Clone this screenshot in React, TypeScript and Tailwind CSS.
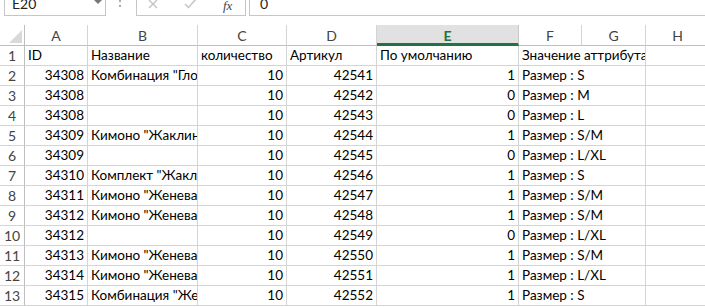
import React from "react";

const cols = [25, 63, 110, 89, 90, 142, 63, 64, 64];

type Row = [string, string, string, string, string, string];

const rows: Row[] = [
  ["34308", 'Комбинация "Глория"', "10", "42541", "1", "Размер : S"],
  ["34308", "", "10", "42542", "0", "Размер : M"],
  ["34308", "", "10", "42543", "0", "Размер : L"],
  ["34309", 'Кимоно "Жаклин"', "10", "42544", "1", "Размер : S/M"],
  ["34309", "", "10", "42545", "0", "Размер : L/XL"],
  ["34310", 'Комплект "Жаклин"', "10", "42546", "1", "Размер : S"],
  ["34311", 'Кимоно "Женева"', "10", "42547", "1", "Размер : S/M"],
  ["34312", 'Кимоно "Женева"', "10", "42548", "1", "Размер : S/M"],
  ["34312", "", "10", "42549", "0", "Размер : L/XL"],
  ["34313", 'Кимоно "Женева"', "10", "42550", "1", "Размер : S/M"],
  ["34314", 'Кимоно "Женева"', "10", "42551", "1", "Размер : L/XL"],
  ["34315", 'Комбинация "Женева"', "10", "42552", "1", "Размер : S"],
];

const cell =
  "h-[20px] border-r border-b border-[#d4d4d4] overflow-hidden whitespace-nowrap leading-[19px] px-[3px] text-black";

export default function App() {
  return (
    <div
      className="w-[705px] h-[307px] overflow-hidden bg-white text-[13.5px]"
      style={{ fontFamily: "Lato, 'Noto Sans', sans-serif" }}
    >
      {/* formula bar */}
      <div className="relative h-[16px] w-[705px]">
        <div className="absolute left-[4px] top-[-9px] w-[102px] h-[25px] border border-[#c6c6c6] flex items-center pl-[7px] text-[14px] text-[#222]">
          E20
          <svg className="absolute left-[88px] top-[7px]" width="10" height="6" viewBox="0 0 10 6">
            <path d="M0 0 L10 0 L5 5 Z" fill="#777" />
          </svg>
        </div>
        <div className="absolute left-[119px] top-[0px] flex flex-col gap-[3px]">
          <div className="w-[2px] h-[2px] bg-[#aaa]" />
          <div className="w-[2px] h-[2px] bg-[#aaa]" />
        </div>
        <div className="absolute left-[136px] top-[-9px] w-[110px] h-[25px] border border-[#c6c6c6]">
          <svg className="absolute left-[11px] top-[7px]" width="10" height="10" viewBox="0 0 10 10">
            <path d="M1 1 L9 9 M9 1 L1 9" stroke="#c4c4c4" strokeWidth="1.4" />
          </svg>
          <svg className="absolute left-[47px] top-[6px]" width="13" height="11" viewBox="0 0 13 11">
            <path d="M1 6 L4.5 9.5 L12 1" stroke="#c4c4c4" strokeWidth="1.5" fill="none" />
          </svg>
          <span
            className="absolute left-[86px] top-[7px] italic text-[13px] leading-[13px] text-[#444]"
            style={{ fontFamily: "'Liberation Serif', serif" }}
          >
            fx
          </span>
        </div>
        <div className="absolute left-[249px] top-[-9px] w-[470px] h-[25px] border border-[#c6c6c6] flex items-center pl-[10px] text-[14px] text-[#222]">
          0
        </div>
      </div>

      {/* spacer */}
      <div className="h-[9px]" />

      {/* sheet */}
      <div
        className="grid w-[710px]"
        style={{ gridTemplateColumns: cols.map((c) => c + "px").join(" ") }}
      >
        {/* header row */}
        <div className="relative h-[21px] border-r border-b border-[#bfbfbf] bg-white">
          <svg className="absolute left-[9px] top-[5px]" width="13" height="13" viewBox="0 0 13 13">
            <path d="M13 0 L13 13 L0 13 Z" fill="#d9d9d9" />
          </svg>
        </div>
        {["A", "B", "C", "D"].map((l) => (
          <div
            key={l}
            className="h-[21px] border-r border-b border-[#d4d4d4] border-b-[#bfbfbf] flex items-center justify-center text-[#444] text-[14px]"
          >
            {l}
          </div>
        ))}
        <div className="h-[21px] bg-[#e1e1e1] border-r border-[#c8c8c8] border-b-[3px] border-b-[#217346] flex items-center justify-center text-[#217346] font-bold text-[14px] pt-[2px]">
          E
        </div>
        {["F", "G", "H"].map((l) => (
          <div
            key={l}
            className="h-[21px] border-r border-b border-[#d4d4d4] border-b-[#bfbfbf] flex items-center justify-center text-[#444] text-[14px]"
          >
            {l}
          </div>
        ))}

        {/* row 1 */}
        <div className="h-[20px] border-r border-b border-[#d4d4d4] border-r-[#bfbfbf] flex items-center justify-center text-[#444] text-[14px] leading-[19px]">
          1
        </div>
        <div className={cell}>ID</div>
        <div className={cell}>Название</div>
        <div className={cell}>количество</div>
        <div className={cell}>Артикул</div>
        <div className={cell}>По умолчанию</div>
        <div className={cell + " col-span-2"}>Значение аттрибута</div>
        <div className={cell}></div>

        {rows.map((r, i) => (
          <React.Fragment key={i}>
            <div className="h-[20px] border-r border-b border-[#d4d4d4] border-r-[#bfbfbf] flex items-center justify-center text-[#444] text-[14px] leading-[19px]">
              {i + 2}
            </div>
            <div className={cell + " text-right"}>{r[0]}</div>
            <div className={cell}>{r[1]}</div>
            <div className={cell + " text-right"}>{r[2]}</div>
            <div className={cell + " text-right"}>{r[3]}</div>
            <div className={cell + " text-right"}>{r[4]}</div>
            <div className={cell + " col-span-2"}>{r[5]}</div>
            <div className={cell}></div>
          </React.Fragment>
        ))}
      </div>
    </div>
  );
}
